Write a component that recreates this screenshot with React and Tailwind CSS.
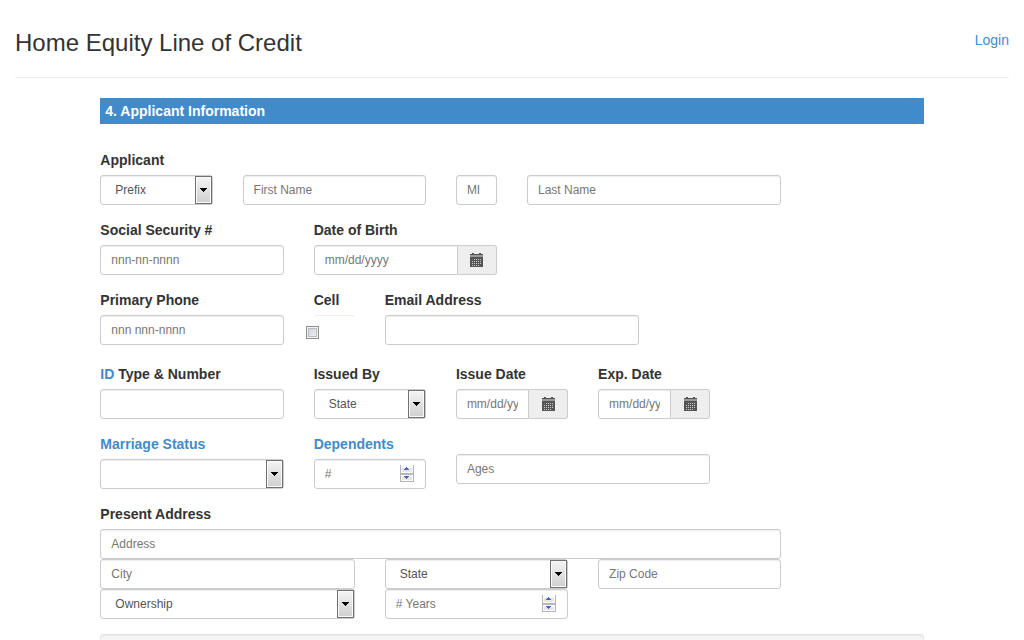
import { useId } from 'react'

const controlClass =
  'block w-full h-[30px] rounded-[3px] border border-[#ccc] bg-white px-2.5 text-xs text-[#555] placeholder:text-[#777] shadow-[inset_0_1px_1px_rgba(0,0,0,0.075)] outline-none focus:border-[#66afe9]'

function Label({ htmlFor, children }) {
  return (
    <label htmlFor={htmlFor} className="block mb-[5px] text-sm leading-5 font-bold whitespace-nowrap">
      {children}
    </label>
  )
}

function HelpLink({ children }) {
  return <a href="#" className="text-[#428bca]">{children}</a>
}

function TextField({ className, label, name, placeholder, type = 'text' }) {
  const id = useId()
  return (
    <div className={className}>
      {label && <Label htmlFor={id}>{label}</Label>}
      <input id={id} type={type} aria-label={label ? undefined : name} placeholder={placeholder} className={controlClass} />
    </div>
  )
}

function SelectField({ className, label, name, placeholder = '' }) {
  const id = useId()
  return (
    <div className={className}>
      {label && <Label htmlFor={id}>{label}</Label>}
      <div className="relative">
        <select id={id} aria-label={label ? undefined : name} className={`${controlClass} appearance-none pl-3.5 pr-5`}>
          <option value="">{placeholder}</option>
        </select>
        <span className="pointer-events-none absolute inset-y-px right-px flex w-[17px] items-center justify-center border border-[#707070] bg-linear-to-b from-[#f4f4f4] to-[#cfcfcf] shadow-[inset_0_0_0_1px_#fafafa]">
          <svg width="7" height="4" viewBox="0 0 7 4" shapeRendering="crispEdges">
            <path d="M0 0h7v1H6v1H5v1H4v1H3V3H2V2H1V1H0z" fill="#000" />
          </svg>
        </span>
      </div>
    </div>
  )
}

function NumberField({ className, label, name, placeholder }) {
  const id = useId()
  return (
    <div className={className}>
      {label && <Label htmlFor={id}>{label}</Label>}
      <div className="relative">
        <input
          id={id}
          type="number"
          aria-label={label ? undefined : name}
          placeholder={placeholder}
          className={`${controlClass} [appearance:textfield]`}
        />
        <svg
          className="pointer-events-none absolute right-3 top-1.5"
          width="14"
          height="17"
          viewBox="0 0 14 17"
          shapeRendering="crispEdges"
        >
          <path d="M0 0h14v17H0z" fill="#b4b6bc" />
          <path d="M1 0h12v8H1zM1 10h12v6H1z" fill="#fafafa" />
          <path d="M2 3h10v4H2zM2 12h10v3H2z" fill="#e6e6ea" />
          <path d="M6 2h1v1h1v1h1v1H4V4h1V3h1zM4 11h5v1H8v1H7v1H6v-1H5v-1H4z" fill="#4a63b8" />
        </svg>
      </div>
    </div>
  )
}

function CalendarIcon() {
  return (
    <svg width="13" height="14" viewBox="0 0 13 14" shapeRendering="crispEdges" aria-hidden="true">
      <path d="M2 0h2v1h5V0h2v1h2v1H0V1h2z" fill="#555" />
      <path d="M0 2h13v2H0z" fill="#999" />
      <path d="M0 4h13v10H0z" fill="#555" />
      <path
        d="M4 6h1v1H4zM6 6h1v1H6zM8 6h1v1H8zM10 6h1v1h-1zM2 8h1v1H2zM4 8h1v1H4zM6 8h1v1H6zM8 8h1v1H8zM10 8h1v1h-1zM2 10h1v1H2zM4 10h1v1H4zM6 10h1v1H6zM8 10h1v1H8zM10 10h1v1h-1zM2 12h1v1H2zM4 12h1v1H4zM6 12h1v1H6zM8 12h1v1H8z"
        fill="#ccc"
      />
    </svg>
  )
}

function DateField({ className, label }) {
  const id = useId()
  return (
    <div className={className}>
      <Label htmlFor={id}>{label}</Label>
      <div className="flex">
        <input id={id} type="text" placeholder="mm/dd/yyyy" className={`${controlClass} min-w-0 flex-1 rounded-r-none`} />
        <button
          type="button"
          aria-label="Open calendar"
          className="flex h-[30px] w-[39px] shrink-0 items-center justify-center rounded-r-[3px] border border-l-0 border-[#ccc] bg-[#eee]"
        >
          <CalendarIcon />
        </button>
      </div>
    </div>
  )
}

function Row({ className = 'mb-[15px]', children }) {
  return <div className={`grid grid-cols-12 gap-x-[30px] ${className}`}>{children}</div>
}

function App() {
  return (
    <div className="px-[15px] font-['Liberation_Sans',Arial,sans-serif] text-sm text-[#333]">
      <header className="flex items-center justify-between border-b border-[#eee] pt-7 pb-5 mb-5">
        <h1 className="text-2xl leading-[29px]">Home Equity Line of Credit</h1>
        <a href="#" className="mb-1.5 text-[#428bca]">Login</a>
      </header>

      <div className="grid grid-cols-12 gap-x-[30px]">
        <main className="col-span-10 col-start-2">
          <h2 className="mb-[26px] bg-[#428bca] px-[5px] py-[3px] text-sm leading-5 font-bold text-white">
            4. Applicant Information
          </h2>

          <form>
            <Row>
              <SelectField className="col-span-2" label="Applicant" placeholder="Prefix" />
              <TextField className="col-span-3 self-end" name="First Name" placeholder="First Name" />
              <TextField className="self-end" name="Middle Initial" placeholder="MI" />
              <TextField className="col-span-4 self-end" name="Last Name" placeholder="Last Name" />
            </Row>

            <Row>
              <TextField className="col-span-3" label="Social Security #" placeholder="nnn-nn-nnnn" />
              <DateField className="col-span-3" label="Date of Birth" />
            </Row>

            <Row className="mb-[19px]">
              <TextField className="col-span-3" label="Primary Phone" placeholder="nnn nnn-nnnn" type="tel" />
              <div>
                <Label htmlFor="cell">Cell</Label>
                <div className="h-[30px] rounded-[3px] pt-[11px] shadow-[inset_0_1px_0_#eee]">
                  <input
                    id="cell"
                    type="checkbox"
                    className="-ml-2 block size-[13px] appearance-none border border-[#8e8f8f] bg-linear-to-br from-[#cbcfd5] to-[#f6f6f6] shadow-[inset_0_0_0_1px_#f4f4f4,inset_0_0_0_2px_#b8bcc2] checked:from-[#428bca]"
                  />
                </div>
              </div>
              <TextField className="col-span-4" label="Email Address" type="email" />
            </Row>

            <Row>
              <TextField className="col-span-3" label={<><HelpLink>ID</HelpLink> Type &amp; Number</>} />
              <SelectField className="col-span-2" label="Issued By" placeholder="State" />
              <DateField className="col-span-2" label="Issue Date" />
              <DateField className="col-span-2" label="Exp. Date" />
            </Row>

            <Row>
              <SelectField className="col-span-3" label={<HelpLink>Marriage Status</HelpLink>} />
              <NumberField className="col-span-2" label={<HelpLink>Dependents</HelpLink>} placeholder="#" />
              <TextField className="col-span-4 pt-5" name="Ages" placeholder="Ages" />
            </Row>

            {/* Address block, rows sit flush against each other */}
            <Row className="mb-0">
              <TextField className="col-span-10" label="Present Address" placeholder="Address" />
            </Row>
            <Row className="mb-0">
              <TextField className="col-span-4" name="City" placeholder="City" />
              <SelectField className="col-span-3" name="State" placeholder="State" />
              <TextField className="col-span-3" name="Zip Code" placeholder="Zip Code" />
            </Row>
            <Row>
              <SelectField className="col-span-4" name="Ownership" placeholder="Ownership" />
              <NumberField className="col-span-3" name="Years at address" placeholder="# Years" />
            </Row>

            <div className="min-h-5 rounded-t border border-b-0 border-[#e3e3e3] bg-[#f5f5f5] shadow-[inset_0_1px_1px_rgba(0,0,0,0.05)]" />
          </form>
        </main>
      </div>
    </div>
  )
}

export default App
